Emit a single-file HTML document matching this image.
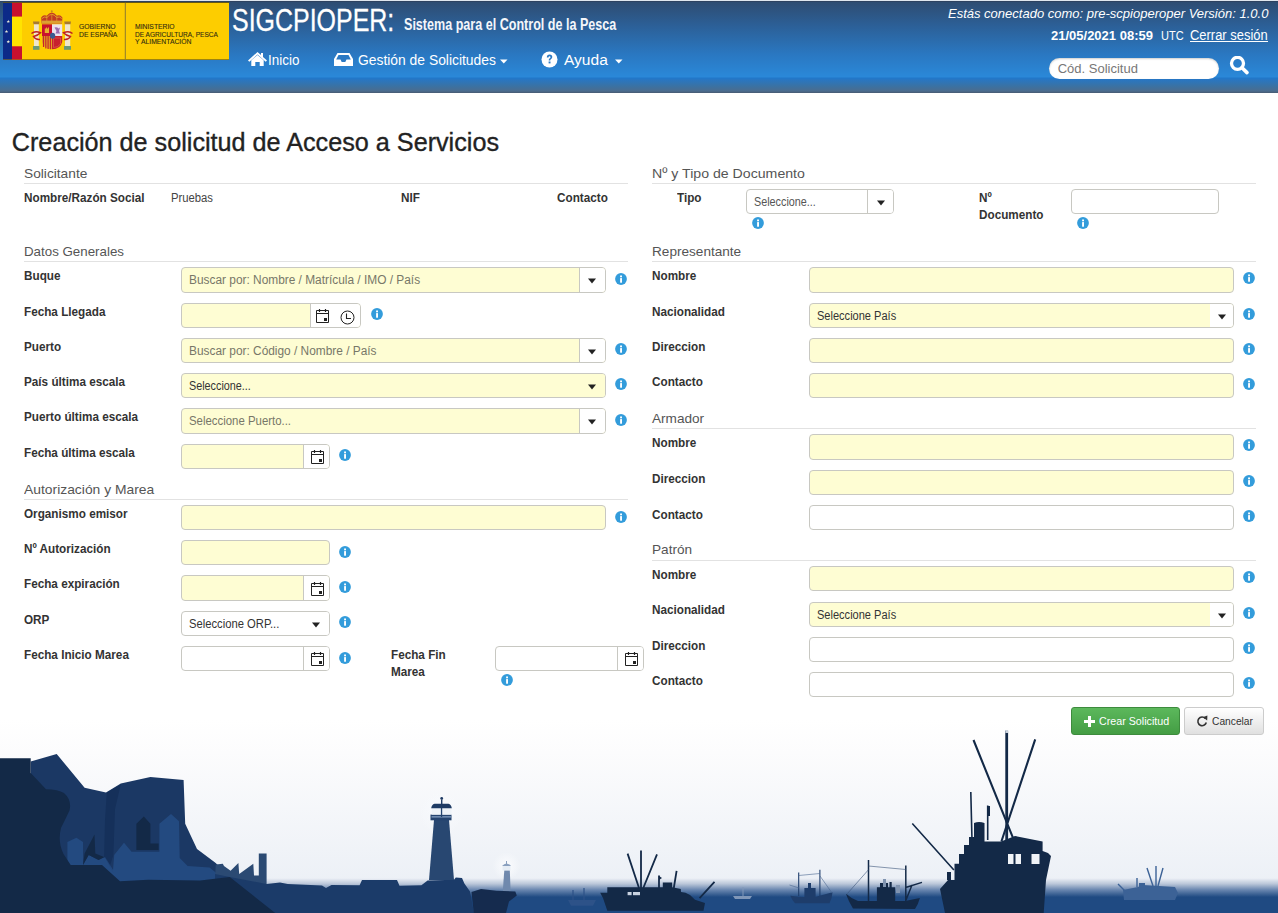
<!DOCTYPE html>
<html><head><meta charset="utf-8"><title>SIGCPIOPER</title>
<style>
html,body{margin:0;padding:0;}
body{width:1278px;height:913px;position:relative;overflow:hidden;background:#fff;font-family:"Liberation Sans",sans-serif;}
.t{position:absolute;white-space:nowrap;line-height:normal;}
.b{position:absolute;box-sizing:border-box;}
.ic{position:absolute;display:block;}
</style></head><body>
<div class="b" style="left:0;top:0;width:1278px;height:93px;background:linear-gradient(#2e4b6f 0px,#2c5f96 25px,#2a78c2 55px,#2a88d8 76.5px,#2277c8 78.5px,#2a76c0 80px,#3a72a4 86px,#4b6c8e 91px,#475a72 93px)"></div>
<div class="b" style="left:0;top:0;width:1278px;height:1px;background:#dfe6ee"></div>
<div class="b" style="left:0;top:1px;width:1278px;height:1px;background:#2d4260"></div>
<svg class="ic" style="left:0;top:0" width="232" height="62" viewBox="0 0 232 62">
<rect x="3" y="2" width="226" height="58" fill="#3c3a1e"/>
<rect x="3" y="2.8" width="226" height="56.7" fill="#fdcd00"/>
<rect x="3" y="2.8" width="9" height="56.7" fill="#0c2a88"/>
<rect x="12" y="2.8" width="10" height="14" fill="#c8102e"/>
<rect x="12" y="16.7" width="10" height="29.6" fill="#ffe300"/>
<rect x="12" y="46.3" width="10" height="13.2" fill="#c8102e"/>
<g fill="#e8e8d8"><polygon points="8.30,19.70 8.74,20.89 10.01,20.94 9.01,21.73 9.36,22.96 8.30,22.25 7.24,22.96 7.59,21.73 6.59,20.94 7.86,20.89"/><polygon points="6.50,29.70 6.94,30.89 8.21,30.94 7.21,31.73 7.56,32.96 6.50,32.25 5.44,32.96 5.79,31.73 4.79,30.94 6.06,30.89"/><polygon points="8.30,39.90 8.74,41.09 10.01,41.14 9.01,41.93 9.36,43.16 8.30,42.45 7.24,43.16 7.59,41.93 6.59,41.14 7.86,41.09"/></g>
<rect x="124.8" y="2.8" width="1" height="56.7" fill="#8a7a30"/>
<path d="M41.6 23.5 L41.2 17.5 Q43.5 14.2 46.8 15.8 Q49 12.6 51.8 12.4 Q54.6 12.6 56.8 15.8 Q60 14.2 62.4 17.5 L62 23.5z" fill="#c23a22"/>
<path d="M42 18.5 Q44.5 16 47 17.5 Q49.5 14.5 51.8 14.3 Q54.2 14.5 56.6 17.5 Q59.5 16 61.8 18.5" stroke="#e3a52c" stroke-width="0.9" fill="none"/>
<path d="M51.8 14.5V21M46.8 16V21M56.8 16V21" stroke="#e3a52c" stroke-width="0.7"/>
<rect x="41.6" y="20.6" width="20.4" height="2.9" fill="#dca032"/>
<circle cx="51.8" cy="11.2" r="1" fill="#c88a20"/>
<path d="M42 24.3H52V36H42z" fill="#c8102e"/>
<path d="M52 24.3H62.2V36H52z" fill="#ece2ee"/>
<path d="M42 36H52V49.3Q43.5 49 42 42z" fill="#e0a020"/>
<path d="M43.5 36V47M45.8 36V48.6M48.1 36V49M50.4 36V49.2" stroke="#c8202e" stroke-width="1.1"/>
<path d="M52 36H62.2V42Q60.5 49.3 52 49.3z" fill="#c8202e"/>
<path d="M53.5 38H60.5V44Q58 47.5 53.5 47.5z" fill="none" stroke="#e07050" stroke-width="0.6"/>
<ellipse cx="52.6" cy="35.8" rx="2.6" ry="3" fill="#3a5a90"/>
<path d="M44.8 33V28.5H46V27.5H47V28.5H48V27.5H49V33z" fill="#e8b030"/>
<path d="M54.5 27.5Q57 26.5 58.5 28.5L60 27.5L59 31L60 33.5H55.5L56.5 31z" fill="#9a6cb0"/>
<rect x="34" y="24" width="4.8" height="22" fill="#efe6cc"/>
<rect x="65" y="24" width="5.2" height="22" fill="#efe6cc"/>
<path d="M33 21.5H39.5L39 24.2H33.5z" fill="#a87a30"/>
<path d="M64.2 21.5H71L70.5 24.2H64.7z" fill="#a87a30"/>
<rect x="33" y="46" width="6.5" height="3.8" fill="#6a9a78"/>
<rect x="64" y="46" width="7" height="3.8" fill="#6a9a78"/>
<path d="M31.5 33.5 Q35 30.5 40.5 32.8 Q38 35.5 33.5 36.5 Q35.5 40 40 39.5" stroke="#c02020" stroke-width="1.5" fill="none"/>
<path d="M72.5 33.5 Q69 30.5 63.5 32.8 Q66 35.5 70.5 36.5 Q68.5 40 64 39.5" stroke="#c02020" stroke-width="1.5" fill="none"/>
<g font-family="Liberation Sans" font-size="6.8" fill="#2f2a10" stroke="#2f2a10" stroke-width="0.1">
<text x="79" y="29.2">GOBIERNO</text><text x="79" y="36.8">DE ESPAÑA</text>
<text x="135" y="29.2">MINISTERIO</text><text x="135" y="36.8" textLength="83" lengthAdjust="spacingAndGlyphs">DE AGRICULTURA, PESCA</text><text x="135" y="43.6">Y ALIMENTACIÓN</text>
</g></svg>
<div class="t" style="left:231.5px;top:1.54px;font-size:32px;font-weight:normal;color:#fff;transform:scaleX(0.78);transform-origin:0 0;-webkit-text-stroke:0.3px #fff;">SIGCPIOPER:</div>
<div class="t" style="left:403.5px;top:15.01px;font-size:17px;font-weight:bold;color:#f4f6fa;transform:scaleX(0.739);transform-origin:0 0;">Sistema para el Control de la Pesca</div>
<div class="t" style="left:948px;top:6.23px;font-size:13px;font-weight:normal;color:#fff;font-style:italic;">Estás conectado como: pre-scpioperoper Versión: 1.0.0</div>
<div class="t" style="left:1051px;top:28.23px;font-size:13px;font-weight:bold;color:#fff;">21/05/2021 08:59</div>
<div class="t" style="left:1160.5px;top:29.14px;font-size:12px;font-weight:normal;color:#fff;transform:scaleX(0.92);transform-origin:0 0;">UTC</div>
<div class="t" style="left:1190px;top:27.33px;font-size:14px;font-weight:normal;color:#fff;transform:scaleX(0.924);transform-origin:0 0;">Cerrar sesión</div>
<div class="b" style="left:1190px;top:41px;width:78px;height:1px;background:#fff"></div>
<div class="b" style="left:1049px;top:58px;width:170px;height:21px;background:#fff;border-radius:11px;box-shadow:inset 0 1px 2px rgba(0,0,0,.2)"></div>
<div class="t" style="left:1057.7px;top:60.94px;font-size:13px;font-weight:normal;color:#777;">Cód. Solicitud</div>
<svg class="ic" style="left:1229px;top:56px" width="21" height="20" viewBox="0 0 21 20"><circle cx="8.5" cy="7.3" r="6" fill="none" stroke="#fff" stroke-width="3.3"/><path d="M13 11.8L18 16.6" stroke="#fff" stroke-width="3.6" stroke-linecap="round"/></svg>
<svg class="ic" style="left:247px;top:51px" width="21" height="16" viewBox="0 0 21 16"><path d="M10.5 1L1 9.5L2.3 10.8L10.5 3.6L18.7 10.8L20 9.5L16 5.9V2H14V4.1z" fill="#fff"/><path d="M4.3 9.3L10.5 4.1L16.7 9.3V15H12.7V11H8.3V15H4.3z" fill="#fff"/></svg>
<div class="t" style="left:268px;top:52.33px;font-size:14px;font-weight:normal;color:#fff;transform:scaleX(0.96);transform-origin:0 0;">Inicio</div>
<svg class="ic" style="left:333px;top:52px" width="21" height="15" viewBox="0 0 21 15"><path d="M4.5 1H16.5L20 7V14H1V7z" fill="#fff"/><path d="M5.5 3H15.5L17.8 7.5H13.5L12.3 10H8.7L7.5 7.5H3.2z" fill="#2b79c4"/></svg>
<div class="t" style="left:358px;top:52.33px;font-size:14px;font-weight:normal;color:#fff;transform:scaleX(0.99);transform-origin:0 0;">Gestión de Solicitudes</div>
<svg class="ic" style="left:500px;top:59px" width="8" height="5" viewBox="0 0 8 5"><path d="M0 0.5H7.5L3.75 4.5z" fill="#fff"/></svg>
<svg class="ic" style="left:541px;top:51px" width="17" height="17" viewBox="0 0 17 17"><circle cx="8.5" cy="8.5" r="8" fill="#fff"/><path d="M5.8 6.4Q5.9 3.6 8.6 3.6Q11.3 3.7 11.3 6Q11.3 7.4 9.8 8.2Q9.3 8.5 9.3 9.6H7.7Q7.6 7.8 8.7 7.2Q9.6 6.7 9.5 6Q9.4 5.2 8.5 5.2Q7.6 5.2 7.5 6.4z" fill="#2b79c4"/><rect x="7.6" y="10.5" width="1.9" height="1.9" fill="#2b79c4"/></svg>
<div class="t" style="left:564px;top:52.33px;font-size:14px;font-weight:normal;color:#fff;transform:scaleX(1.11);transform-origin:0 0;">Ayuda</div>
<svg class="ic" style="left:615px;top:59px" width="8" height="5" viewBox="0 0 8 5"><path d="M0 0.5H7.5L3.75 4.5z" fill="#fff"/></svg>
<svg class="ic" style="left:0;top:720px" width="1278" height="193" viewBox="0 720 1278 193">
<defs>
<linearGradient id="sky" x1="0" y1="720" x2="0" y2="882" gradientUnits="userSpaceOnUse"><stop offset="0" stop-color="#fff"/><stop offset="0.2" stop-color="#fcfcfd"/><stop offset="1" stop-color="#ecf0f6"/></linearGradient>
<linearGradient id="sea" x1="0" y1="878" x2="0" y2="897" gradientUnits="userSpaceOnUse"><stop offset="0" stop-color="#eef1f7"/><stop offset="0.3" stop-color="#bcc8da"/><stop offset="0.62" stop-color="#6a87b0"/><stop offset="1" stop-color="#1f4a82"/></linearGradient>
<radialGradient id="glow" cx="441" cy="813" r="22" gradientUnits="userSpaceOnUse"><stop offset="0" stop-color="#f8fafd"/><stop offset="1" stop-color="#f8fafd" stop-opacity="0"/></radialGradient>
<radialGradient id="glow2" cx="506.5" cy="866" r="14" gradientUnits="userSpaceOnUse"><stop offset="0" stop-color="#fbfcfe"/><stop offset="1" stop-color="#fbfcfe" stop-opacity="0"/></radialGradient>
</defs>
<rect x="0" y="720" width="1278" height="193" fill="url(#sky)"/>
<rect x="0" y="878" width="1278" height="35" fill="url(#sea)"/>
<circle cx="441" cy="813" r="22" fill="url(#glow)"/>
<circle cx="506.5" cy="866" r="14" fill="url(#glow2)"/>
<!-- mid cliff layer -->
<path d="M30.7 761.4 L56.7 754 L84.6 787.7 L106 792.6 L120.8 783.5 L150.4 777 L183.6 780 L185.2 823.8 L197 848.9 L215.7 863 L232 879 L232 895 L60 895 L30.7 800z" fill="#1b3864"/>
<!-- crevice -->
<path d="M106.8 792.6 L120.8 784.4 L115 809 L113.4 855 L108.5 870 L104 860 L105 820z" fill="#15305a"/>
<!-- light buildings -->
<path d="M67.4 865 L67.4 842 L76.4 837.8 L83 842 L83 865 L88.7 855 L98.6 860 L105 856.7 L113 870 L114.2 855 L124 842.7 L131.5 851.7 L159.4 851.7 L159.4 823.8 L171 814 L179 821.3 L179.7 858 L187.6 866 L209.5 867.6 L224 879 L224 895 L90 895 L90 868z" fill="#234a80"/>
<!-- dark zigzag -->
<path d="M84.6 853.4 L94.5 834.5 L95.3 853.4 L105.2 857.5 L113.4 873 L105 856.7 L98.6 860 L88.7 855 L83 865z" fill="#132947"/>
<path d="M136.4 850 L136.4 823.8 L143.8 816.4 L150.4 823.8 L150.4 843.5 L158.6 843.5 L158.6 850z" fill="#132947"/>
<!-- factory -->
<path d="M215.7 864.5 L222.8 863.7 L224 866 L230.6 870.8 L238.4 863 L239.2 874 L253.3 863.7 L254 875.5 L258.8 875.5 L258.8 853.5 L266.6 853.5 L266.6 886 L240 895 L215 880z" fill="#2b4a73"/>
<!-- land strip -->
<path d="M215 874 L229.8 877 L266.6 884 L280 882.5 L287.7 884 L322 885.6 L326 888 L331.5 885 L359.6 885.2 L362 880 L397 880 L399.5 885.7 L421.4 885.2 L427.6 880.5 L454 879.7 L455.8 877.4 L462 878 L464.4 883.6 L470 891.5 L474 913 L215 913z" fill="#1b3b69"/>
<!-- darkest cliff -->
<path d="M0 758.2 L30.7 758.2 L30.7 773 L46 789.3 Q58 789.5 64 793 Q72 800 69.5 810.5 Q65 820 61 828 Q57.5 842 63.5 854 L70.7 865 L102 865 L120 881.3 L148 879.7 L200 880.5 L229.8 877 L275.2 913 L0 913z" fill="#132947"/>
<!-- rock -->
<path d="M471.5 892 L481 889 L496.5 890.7 L515.3 891.5 L516.8 895.4 L509 901.6 L506 913 L473.8 913z" fill="#152b4e"/>
<!-- lighthouse -->
<path d="M434 820 L449 820 L454 880 L429 880z" fill="#284771"/>
<rect x="430.5" y="814.6" width="21" height="5.7" fill="#25446f"/>
<rect x="431.5" y="816.4" width="19.5" height="1" fill="#9fb8da"/>
<rect x="431.8" y="808" width="19.8" height="6.6" fill="#eef3f8"/>
<rect x="440.9" y="807" width="1.3" height="10" fill="#25446f"/>
<path d="M431.2 808.2 Q431.8 804.6 434.5 803.8 L448.5 803.8 Q451.2 804.6 451.8 808.2z" fill="#1f3b64"/>
<rect x="441" y="799.5" width="1.4" height="5" fill="#1f3b64"/>
<circle cx="441.7" cy="798.4" r="1.4" fill="#1f3b64"/>
<!-- small lighthouse -->
<path d="M504.3 870.3 L509.8 870.3 L510.6 891 L502.8 891z" fill="#7089ad"/>
<rect x="502.5" y="865.5" width="8" height="5" fill="#e6edf5"/>
<path d="M502 866 Q506.4 861 511 866z" fill="#8aa0bf"/>
<rect x="506" y="861" width="1" height="3" fill="#8aa0bf"/>
<!-- faint boats -->
<path d="M568 900 L596 900 L593 905.7 L571 905.7z" fill="#2d5288"/>
<path d="M573 890 V900 M584 888 V900" stroke="#2d5288" stroke-width="1.2"/>
<path d="M733 896 L752 896 L750 899 L735 899z" fill="#8097b8"/>
<path d="M743 887 V896" stroke="#8097b8" stroke-width="1"/>
<!-- boat 1 -->
<path d="M600.2 892.8 L607.3 892.8 L607.3 887.3 L662.8 887.3 L662.8 882.6 L672.2 882.6 L672.2 887.3 L680.8 888.9 L681 892 L685.5 892.8 L690 895 L695 899.8 L705 903 L703.5 910.8 L607.3 910.8 L603 898z" fill="#132947"/>
<path d="M641 850.5 V888 M627.6 853.6 L639 888 M657 854.4 L643.3 888 M714.5 881.8 L699.6 898.2 M676.6 870.9 L673.8 888 M659 875.6 V888" stroke="#132947" stroke-width="1.8"/>
<path d="M659 876 L662 878 L659 880z" fill="#132947"/>
<rect x="627.6" y="892" width="4" height="3.2" fill="#c8d2e0"/>
<rect x="633" y="892" width="7" height="3.2" fill="#c8d2e0"/>
<!-- boat 2 -->
<path d="M790.3 895.8 Q800 897.5 815 897 L832.5 892.3 Q832 899 829.5 903.2 L795 903.2 Q792 900 790.3 895.8z" fill="#1e3d6b"/>
<path d="M798.7 872.5 V896 M819.9 869.7 V896" stroke="#1e3d6b" stroke-width="1.1"/>
<path d="M798.7 875.5 L819.9 873.5 M789.5 885 L799 888 M820 876 L832 893" stroke="#4a6690" stroke-width="0.6" fill="none"/>
<path d="M804.4 888 H815.6 V897 H804.4z M808 883 H811 V888 H808z" fill="#1e3d6b"/>
<!-- boat 3 -->
<path d="M846 893.7 Q852 899 858 901 L905 901 L919.9 897.9 Q918 905 915 909 L853 908.5 Q848 900 846 893.7z" fill="#132947"/>
<path d="M868.5 859.9 V901 M905.8 865.5 V901 M906.5 887.3 L922 882.4 M912 885 L906 900" stroke="#132947" stroke-width="1.5"/>
<path d="M868.5 866 L905.8 869.5 M847.3 893.7 L868.5 869.7" stroke="#3a5478" stroke-width="0.6" fill="none"/>
<path d="M876.9 887.3 H895.2 V901 H876.9z M880 883 H888 V887.3 H880z" fill="#132947"/>
<rect x="889.5" y="882" width="2.2" height="6" fill="#132947"/>
<rect x="883" y="879" width="3" height="8" fill="#8094b0"/>
<rect x="896" y="885" width="4" height="8" fill="#8094b0"/>
<!-- big boat -->
<path d="M973.5 740 L1014 840.4 M1035.2 739.4 L1001.4 841.5" stroke="#132947" stroke-width="2.1"/><path d="M1006.7 730.6 V842" stroke="#132947" stroke-width="2.8"/>
<rect x="1005.4" y="730" width="2.6" height="3" fill="#c8d0dc"/>
<path d="M970.8 792 L972 840 M987.7 805.6 V840 M912.3 823.5 L953.9 870" stroke="#132947" stroke-width="1.6"/>
<path d="M987 806 L990 806 L990 816 L987 816z" fill="#132947"/>
<path d="M974 823 Q979 821 984.5 823 L984.5 841.5 L1001 841.5 L1015 836 L1042.6 841.5 L1042.6 851 L1048 853 L1051 856 L1046 880 L1043.7 913 L945 913 L940 889 L948 880 L954.5 880 L954.5 863.7 L959 863.7 L959 854 L964 854 L964 845 L969 845 L969 837 L974 837z" fill="#132947"/>
<rect x="1008" y="854" width="13" height="10" fill="#f0f3f7"/>
<rect x="1013.5" y="854" width="2" height="10" fill="#132947"/>
<rect x="1031.5" y="854" width="8" height="10" fill="#f0f3f7"/>
<rect x="947" y="872" width="4" height="8" fill="#132947"/>
<!-- far right boat -->
<g fill="#3c6296" stroke="#3c6296">
<path d="M1123 890 L1138 887 L1143 885 L1175 887 L1178 893 L1175 900 L1124 900z" stroke="none"/>
<path d="M1156 866 V886 M1147 868 L1153 886 M1163 868 L1158 886 M1118 884 L1128 894 M1137 878 V887" stroke-width="1.4" fill="none"/>
<rect x="1139" y="883" width="6" height="4" stroke="none"/>
</g>
</svg>

<div class="t" style="left:11.8px;top:128.19px;font-size:25.2px;font-weight:normal;color:#222;-webkit-text-stroke:0.35px #222;">Creación de solicitud de Acceso a Servicios</div>
<div class="t" style="left:24px;top:165.69px;font-size:13.6px;font-weight:normal;color:#555;transform:scaleX(1.01);transform-origin:0 0;">Solicitante</div>
<div class="b" style="left:24px;top:183px;width:604px;height:1px;background:#e2e2e2"></div>
<div class="t" style="left:24px;top:191.14px;font-size:12px;font-weight:bold;color:#333;transform:scaleX(0.977);transform-origin:0 0;">Nombre/Razón Social</div>
<div class="t" style="left:171px;top:191.14px;font-size:12px;font-weight:normal;color:#444;transform:scaleX(0.94);transform-origin:0 0;">Pruebas</div>
<div class="t" style="left:401px;top:191.14px;font-size:12px;font-weight:bold;color:#333;transform:scaleX(0.977);transform-origin:0 0;">NIF</div>
<div class="t" style="left:557px;top:191.14px;font-size:12px;font-weight:bold;color:#333;transform:scaleX(0.977);transform-origin:0 0;">Contacto</div>
<div class="t" style="left:24px;top:243.69px;font-size:13.6px;font-weight:normal;color:#555;transform:scaleX(0.98);transform-origin:0 0;">Datos Generales</div>
<div class="b" style="left:24px;top:261px;width:604px;height:1px;background:#e2e2e2"></div>
<div class="t" style="left:24px;top:269.14px;font-size:12px;font-weight:bold;color:#333;transform:scaleX(0.977);transform-origin:0 0;">Buque</div>
<div class="t" style="left:24px;top:305.14px;font-size:12px;font-weight:bold;color:#333;transform:scaleX(0.977);transform-origin:0 0;">Fecha Llegada</div>
<div class="t" style="left:24px;top:340.14px;font-size:12px;font-weight:bold;color:#333;transform:scaleX(0.977);transform-origin:0 0;">Puerto</div>
<div class="t" style="left:24px;top:375.14px;font-size:12px;font-weight:bold;color:#333;transform:scaleX(0.977);transform-origin:0 0;">País última escala</div>
<div class="t" style="left:24px;top:410.14px;font-size:12px;font-weight:bold;color:#333;transform:scaleX(0.977);transform-origin:0 0;">Puerto última escala</div>
<div class="t" style="left:24px;top:445.74px;font-size:12px;font-weight:bold;color:#333;transform:scaleX(0.977);transform-origin:0 0;">Fecha última escala</div>
<div class="b" style="left:181px;top:267px;width:425px;height:26px;background:#fefdd3;border:1px solid #c8c8c2;border-radius:4px;overflow:hidden"><div style="position:absolute;right:0;top:0;bottom:0;width:25px;background:#fff;border-left:1px solid #c8c8c2"></div><svg width="8" height="6" viewBox="0 0 8 6" style="position:absolute;left:406px;top:10px"><path d="M0 0.5H8L4 5.5z" fill="#222"/></svg></div>
<div class="t" style="left:189px;top:272.64px;font-size:12px;font-weight:normal;color:#777768;transform:scaleX(0.99);transform-origin:0 0;">Buscar por: Nombre / Matrícula / IMO / País</div>
<svg class="ic" style="left:615px;top:272.5px" width="12" height="12" viewBox="0 0 12 12"><circle cx="6" cy="6" r="5.9" fill="#339cdb"/><rect x="5.1" y="2.5" width="1.9" height="1.8" fill="#fff"/><rect x="5.1" y="5.1" width="1.9" height="4.6" fill="#fff"/></svg>
<div class="b" style="left:181px;top:303px;width:180px;height:25px;background:#fefdd3;border:1px solid #c8c8c2;border-radius:4px;overflow:hidden"><div style="position:absolute;right:0;top:0;bottom:0;width:49px;background:#fff;border-left:1px solid #c8c8c2"></div><svg width="15" height="15" viewBox="0 0 15 15" style="position:absolute;left:133px;top:4px"><path d="M1.5 2.5H13.5V14.5H1.5z" fill="none" stroke="#222" stroke-width="1"/><path d="M1.5 5.5H13.5" stroke="#222" stroke-width="1"/><path d="M4.5 1V4M10.5 1V4" stroke="#222" stroke-width="1.2"/><rect x="9" y="10" width="3" height="3" fill="#222"/></svg><svg width="15" height="15" viewBox="0 0 15 15" style="position:absolute;left:158px;top:6px"><circle cx="7.5" cy="7.5" r="6.5" fill="none" stroke="#222" stroke-width="1"/><path d="M6.5 3.5V8.5H11" fill="none" stroke="#222" stroke-width="1.1"/></svg></div>
<svg class="ic" style="left:371px;top:307.5px" width="12" height="12" viewBox="0 0 12 12"><circle cx="6" cy="6" r="5.9" fill="#339cdb"/><rect x="5.1" y="2.5" width="1.9" height="1.8" fill="#fff"/><rect x="5.1" y="5.1" width="1.9" height="4.6" fill="#fff"/></svg>
<div class="b" style="left:181px;top:338px;width:425px;height:25px;background:#fefdd3;border:1px solid #c8c8c2;border-radius:4px;overflow:hidden"><div style="position:absolute;right:0;top:0;bottom:0;width:25px;background:#fff;border-left:1px solid #c8c8c2"></div><svg width="8" height="6" viewBox="0 0 8 6" style="position:absolute;left:406px;top:10px"><path d="M0 0.5H8L4 5.5z" fill="#222"/></svg></div>
<div class="t" style="left:189px;top:343.64px;font-size:12px;font-weight:normal;color:#777768;transform:scaleX(0.99);transform-origin:0 0;">Buscar por: Código / Nombre / País</div>
<svg class="ic" style="left:615px;top:342.5px" width="12" height="12" viewBox="0 0 12 12"><circle cx="6" cy="6" r="5.9" fill="#339cdb"/><rect x="5.1" y="2.5" width="1.9" height="1.8" fill="#fff"/><rect x="5.1" y="5.1" width="1.9" height="4.6" fill="#fff"/></svg>
<div class="b" style="left:181px;top:373px;width:425px;height:25px;background:#fefdd3;border:1px solid #c8c8c2;border-radius:4px;overflow:hidden"><div style="position:absolute;right:0;top:0;bottom:0;width:25px;background:#fefdd3"></div><svg width="8" height="6" viewBox="0 0 8 6" style="position:absolute;left:406px;top:10px"><path d="M0 0.5H8L4 5.5z" fill="#222"/></svg></div>
<div class="t" style="left:189px;top:378.64px;font-size:12px;font-weight:normal;color:#333;transform:scaleX(0.9);transform-origin:0 0;">Seleccione...</div>
<svg class="ic" style="left:615px;top:378px" width="12" height="12" viewBox="0 0 12 12"><circle cx="6" cy="6" r="5.9" fill="#339cdb"/><rect x="5.1" y="2.5" width="1.9" height="1.8" fill="#fff"/><rect x="5.1" y="5.1" width="1.9" height="4.6" fill="#fff"/></svg>
<div class="b" style="left:181px;top:408px;width:425px;height:26px;background:#fefdd3;border:1px solid #c8c8c2;border-radius:4px;overflow:hidden"><div style="position:absolute;right:0;top:0;bottom:0;width:25px;background:#fff;border-left:1px solid #c8c8c2"></div><svg width="8" height="6" viewBox="0 0 8 6" style="position:absolute;left:406px;top:10px"><path d="M0 0.5H8L4 5.5z" fill="#222"/></svg></div>
<div class="t" style="left:189px;top:413.64px;font-size:12px;font-weight:normal;color:#777768;transform:scaleX(0.95);transform-origin:0 0;">Seleccione Puerto...</div>
<svg class="ic" style="left:615px;top:413.5px" width="12" height="12" viewBox="0 0 12 12"><circle cx="6" cy="6" r="5.9" fill="#339cdb"/><rect x="5.1" y="2.5" width="1.9" height="1.8" fill="#fff"/><rect x="5.1" y="5.1" width="1.9" height="4.6" fill="#fff"/></svg>
<div class="b" style="left:181px;top:444px;width:149px;height:25px;background:#fefdd3;border:1px solid #c8c8c2;border-radius:4px;overflow:hidden"><div style="position:absolute;right:0;top:0;bottom:0;width:25px;background:#fff;border-left:1px solid #c8c8c2"></div><svg width="15" height="15" viewBox="0 0 15 15" style="position:absolute;left:128px;top:4px"><path d="M1.5 2.5H13.5V14.5H1.5z" fill="none" stroke="#222" stroke-width="1"/><path d="M1.5 5.5H13.5" stroke="#222" stroke-width="1"/><path d="M4.5 1V4M10.5 1V4" stroke="#222" stroke-width="1.2"/><rect x="9" y="10" width="3" height="3" fill="#222"/></svg></div>
<svg class="ic" style="left:339px;top:448.5px" width="12" height="12" viewBox="0 0 12 12"><circle cx="6" cy="6" r="5.9" fill="#339cdb"/><rect x="5.1" y="2.5" width="1.9" height="1.8" fill="#fff"/><rect x="5.1" y="5.1" width="1.9" height="4.6" fill="#fff"/></svg>
<div class="t" style="left:24px;top:481.89px;font-size:13.6px;font-weight:normal;color:#555;transform:scaleX(1.02);transform-origin:0 0;">Autorización y Marea</div>
<div class="b" style="left:24px;top:499px;width:604px;height:1px;background:#e2e2e2"></div>
<div class="t" style="left:24px;top:507.44px;font-size:12px;font-weight:bold;color:#333;transform:scaleX(0.977);transform-origin:0 0;">Organismo emisor</div>
<div class="t" style="left:24px;top:542.14px;font-size:12px;font-weight:bold;color:#333;transform:scaleX(0.977);transform-origin:0 0;">Nº Autorización</div>
<div class="t" style="left:24px;top:576.94px;font-size:12px;font-weight:bold;color:#333;transform:scaleX(0.977);transform-origin:0 0;">Fecha expiración</div>
<div class="t" style="left:24px;top:612.84px;font-size:12px;font-weight:bold;color:#333;transform:scaleX(0.977);transform-origin:0 0;">ORP</div>
<div class="t" style="left:24px;top:647.64px;font-size:12px;font-weight:bold;color:#333;transform:scaleX(0.977);transform-origin:0 0;">Fecha Inicio Marea</div>
<div class="b" style="left:181px;top:505px;width:425px;height:25px;background:#fefdd3;border:1px solid #c8c8c2;border-radius:4px;overflow:hidden"></div>
<svg class="ic" style="left:615px;top:510.5px" width="12" height="12" viewBox="0 0 12 12"><circle cx="6" cy="6" r="5.9" fill="#339cdb"/><rect x="5.1" y="2.5" width="1.9" height="1.8" fill="#fff"/><rect x="5.1" y="5.1" width="1.9" height="4.6" fill="#fff"/></svg>
<div class="b" style="left:181px;top:540px;width:149px;height:25px;background:#fefdd3;border:1px solid #c8c8c2;border-radius:4px;overflow:hidden"></div>
<svg class="ic" style="left:339px;top:545.5px" width="12" height="12" viewBox="0 0 12 12"><circle cx="6" cy="6" r="5.9" fill="#339cdb"/><rect x="5.1" y="2.5" width="1.9" height="1.8" fill="#fff"/><rect x="5.1" y="5.1" width="1.9" height="4.6" fill="#fff"/></svg>
<div class="b" style="left:181px;top:575px;width:149px;height:26px;background:#fefdd3;border:1px solid #c8c8c2;border-radius:4px;overflow:hidden"><div style="position:absolute;right:0;top:0;bottom:0;width:25px;background:#fff;border-left:1px solid #c8c8c2"></div><svg width="15" height="15" viewBox="0 0 15 15" style="position:absolute;left:128px;top:5px"><path d="M1.5 2.5H13.5V14.5H1.5z" fill="none" stroke="#222" stroke-width="1"/><path d="M1.5 5.5H13.5" stroke="#222" stroke-width="1"/><path d="M4.5 1V4M10.5 1V4" stroke="#222" stroke-width="1.2"/><rect x="9" y="10" width="3" height="3" fill="#222"/></svg></div>
<svg class="ic" style="left:339px;top:580.5px" width="12" height="12" viewBox="0 0 12 12"><circle cx="6" cy="6" r="5.9" fill="#339cdb"/><rect x="5.1" y="2.5" width="1.9" height="1.8" fill="#fff"/><rect x="5.1" y="5.1" width="1.9" height="4.6" fill="#fff"/></svg>
<div class="b" style="left:181px;top:611px;width:149px;height:25px;background:#fff;border:1px solid #c8c8c2;border-radius:4px;overflow:hidden"><div style="position:absolute;right:0;top:0;bottom:0;width:25px;background:#fff"></div><svg width="8" height="6" viewBox="0 0 8 6" style="position:absolute;left:130px;top:10px"><path d="M0 0.5H8L4 5.5z" fill="#222"/></svg></div>
<div class="t" style="left:189px;top:616.64px;font-size:12px;font-weight:normal;color:#333;transform:scaleX(0.936);transform-origin:0 0;">Seleccione ORP...</div>
<svg class="ic" style="left:339px;top:615.5px" width="12" height="12" viewBox="0 0 12 12"><circle cx="6" cy="6" r="5.9" fill="#339cdb"/><rect x="5.1" y="2.5" width="1.9" height="1.8" fill="#fff"/><rect x="5.1" y="5.1" width="1.9" height="4.6" fill="#fff"/></svg>
<div class="b" style="left:181px;top:646px;width:149px;height:25px;background:#fff;border:1px solid #c8c8c2;border-radius:4px;overflow:hidden"><div style="position:absolute;right:0;top:0;bottom:0;width:25px;background:#fff;border-left:1px solid #c8c8c2"></div><svg width="15" height="15" viewBox="0 0 15 15" style="position:absolute;left:128px;top:4px"><path d="M1.5 2.5H13.5V14.5H1.5z" fill="none" stroke="#222" stroke-width="1"/><path d="M1.5 5.5H13.5" stroke="#222" stroke-width="1"/><path d="M4.5 1V4M10.5 1V4" stroke="#222" stroke-width="1.2"/><rect x="9" y="10" width="3" height="3" fill="#222"/></svg></div>
<svg class="ic" style="left:339px;top:651.5px" width="12" height="12" viewBox="0 0 12 12"><circle cx="6" cy="6" r="5.9" fill="#339cdb"/><rect x="5.1" y="2.5" width="1.9" height="1.8" fill="#fff"/><rect x="5.1" y="5.1" width="1.9" height="4.6" fill="#fff"/></svg>
<div class="t" style="left:391px;top:647.84px;font-size:12px;font-weight:bold;color:#333;transform:scaleX(0.977);transform-origin:0 0;">Fecha Fin</div>
<div class="t" style="left:391px;top:665.14px;font-size:12px;font-weight:bold;color:#333;transform:scaleX(0.977);transform-origin:0 0;">Marea</div>
<div class="b" style="left:495px;top:646px;width:149px;height:25px;background:#fff;border:1px solid #c8c8c2;border-radius:4px;overflow:hidden"><div style="position:absolute;right:0;top:0;bottom:0;width:25px;background:#fff;border-left:1px solid #c8c8c2"></div><svg width="15" height="15" viewBox="0 0 15 15" style="position:absolute;left:128px;top:4px"><path d="M1.5 2.5H13.5V14.5H1.5z" fill="none" stroke="#222" stroke-width="1"/><path d="M1.5 5.5H13.5" stroke="#222" stroke-width="1"/><path d="M4.5 1V4M10.5 1V4" stroke="#222" stroke-width="1.2"/><rect x="9" y="10" width="3" height="3" fill="#222"/></svg></div>
<svg class="ic" style="left:501px;top:673.5px" width="12" height="12" viewBox="0 0 12 12"><circle cx="6" cy="6" r="5.9" fill="#339cdb"/><rect x="5.1" y="2.5" width="1.9" height="1.8" fill="#fff"/><rect x="5.1" y="5.1" width="1.9" height="4.6" fill="#fff"/></svg>
<div class="t" style="left:652px;top:165.69px;font-size:13.6px;font-weight:normal;color:#555;transform:scaleX(1.04);transform-origin:0 0;">Nº y Tipo de Documento</div>
<div class="b" style="left:652px;top:183px;width:604px;height:1px;background:#e2e2e2"></div>
<div class="t" style="left:677px;top:191.14px;font-size:12px;font-weight:bold;color:#333;transform:scaleX(0.977);transform-origin:0 0;">Tipo</div>
<div class="b" style="left:746px;top:189px;width:148px;height:25px;background:#fff;border:1px solid #c8c8c2;border-radius:4px;overflow:hidden"><div style="position:absolute;right:0;top:0;bottom:0;width:25px;background:#fff;border-left:1px solid #c8c8c2"></div><svg width="8" height="6" viewBox="0 0 8 6" style="position:absolute;left:130px;top:10px"><path d="M0 0.5H8L4 5.5z" fill="#222"/></svg></div>
<div class="t" style="left:754px;top:194.64px;font-size:12px;font-weight:normal;color:#555;transform:scaleX(0.9);transform-origin:0 0;">Seleccione...</div>
<svg class="ic" style="left:751.5px;top:216.7px" width="12" height="12" viewBox="0 0 12 12"><circle cx="6" cy="6" r="5.9" fill="#339cdb"/><rect x="5.1" y="2.5" width="1.9" height="1.8" fill="#fff"/><rect x="5.1" y="5.1" width="1.9" height="4.6" fill="#fff"/></svg>
<div class="t" style="left:978.7px;top:190.94px;font-size:12px;font-weight:bold;color:#333;transform:scaleX(0.977);transform-origin:0 0;">Nº</div>
<div class="t" style="left:978.7px;top:208.14px;font-size:12px;font-weight:bold;color:#333;transform:scaleX(0.977);transform-origin:0 0;">Documento</div>
<div class="b" style="left:1071px;top:189px;width:148px;height:25px;background:#fff;border:1px solid #c8c8c2;border-radius:4px;overflow:hidden"></div>
<svg class="ic" style="left:1077px;top:217px" width="12" height="12" viewBox="0 0 12 12"><circle cx="6" cy="6" r="5.9" fill="#339cdb"/><rect x="5.1" y="2.5" width="1.9" height="1.8" fill="#fff"/><rect x="5.1" y="5.1" width="1.9" height="4.6" fill="#fff"/></svg>
<div class="t" style="left:652px;top:243.69px;font-size:13.6px;font-weight:normal;color:#555;">Representante</div>
<div class="b" style="left:652px;top:261px;width:604px;height:1px;background:#e2e2e2"></div>
<div class="t" style="left:652px;top:410.69px;font-size:13.6px;font-weight:normal;color:#555;">Armador</div>
<div class="b" style="left:652px;top:428px;width:604px;height:1px;background:#e2e2e2"></div>
<div class="t" style="left:652px;top:542.09px;font-size:13.6px;font-weight:normal;color:#555;">Patrón</div>
<div class="b" style="left:652px;top:560px;width:604px;height:1px;background:#e2e2e2"></div>
<div class="t" style="left:652px;top:269.14px;font-size:12px;font-weight:bold;color:#333;transform:scaleX(0.977);transform-origin:0 0;">Nombre</div>
<div class="b" style="left:809px;top:267px;width:425px;height:26px;background:#fefdd3;border:1px solid #c8c8c2;border-radius:4px;overflow:hidden"></div>
<svg class="ic" style="left:1243.1px;top:272.4px" width="12" height="12" viewBox="0 0 12 12"><circle cx="6" cy="6" r="5.9" fill="#339cdb"/><rect x="5.1" y="2.5" width="1.9" height="1.8" fill="#fff"/><rect x="5.1" y="5.1" width="1.9" height="4.6" fill="#fff"/></svg>
<div class="t" style="left:652px;top:305.14px;font-size:12px;font-weight:bold;color:#333;transform:scaleX(0.977);transform-origin:0 0;">Nacionalidad</div>
<div class="b" style="left:809px;top:303px;width:425px;height:25px;background:#fefdd3;border:1px solid #c8c8c2;border-radius:4px;overflow:hidden"><div style="position:absolute;right:0;top:0;bottom:0;width:23px;background:#fff"></div><svg width="8" height="6" viewBox="0 0 8 6" style="position:absolute;left:408px;top:10px"><path d="M0 0.5H8L4 5.5z" fill="#222"/></svg></div>
<div class="t" style="left:817px;top:308.64px;font-size:12px;font-weight:normal;color:#333;transform:scaleX(0.92);transform-origin:0 0;">Seleccione País</div>
<svg class="ic" style="left:1243.1px;top:308.4px" width="12" height="12" viewBox="0 0 12 12"><circle cx="6" cy="6" r="5.9" fill="#339cdb"/><rect x="5.1" y="2.5" width="1.9" height="1.8" fill="#fff"/><rect x="5.1" y="5.1" width="1.9" height="4.6" fill="#fff"/></svg>
<div class="t" style="left:652px;top:340.14px;font-size:12px;font-weight:bold;color:#333;transform:scaleX(0.977);transform-origin:0 0;">Direccion</div>
<div class="b" style="left:809px;top:338px;width:425px;height:25px;background:#fefdd3;border:1px solid #c8c8c2;border-radius:4px;overflow:hidden"></div>
<svg class="ic" style="left:1243.1px;top:343.4px" width="12" height="12" viewBox="0 0 12 12"><circle cx="6" cy="6" r="5.9" fill="#339cdb"/><rect x="5.1" y="2.5" width="1.9" height="1.8" fill="#fff"/><rect x="5.1" y="5.1" width="1.9" height="4.6" fill="#fff"/></svg>
<div class="t" style="left:652px;top:374.84px;font-size:12px;font-weight:bold;color:#333;transform:scaleX(0.977);transform-origin:0 0;">Contacto</div>
<div class="b" style="left:809px;top:373px;width:425px;height:25px;background:#fefdd3;border:1px solid #c8c8c2;border-radius:4px;overflow:hidden"></div>
<svg class="ic" style="left:1243.1px;top:378.4px" width="12" height="12" viewBox="0 0 12 12"><circle cx="6" cy="6" r="5.9" fill="#339cdb"/><rect x="5.1" y="2.5" width="1.9" height="1.8" fill="#fff"/><rect x="5.1" y="5.1" width="1.9" height="4.6" fill="#fff"/></svg>
<div class="t" style="left:652px;top:436.14px;font-size:12px;font-weight:bold;color:#333;transform:scaleX(0.977);transform-origin:0 0;">Nombre</div>
<div class="b" style="left:809px;top:434px;width:425px;height:26px;background:#fefdd3;border:1px solid #c8c8c2;border-radius:4px;overflow:hidden"></div>
<svg class="ic" style="left:1243.1px;top:439.4px" width="12" height="12" viewBox="0 0 12 12"><circle cx="6" cy="6" r="5.9" fill="#339cdb"/><rect x="5.1" y="2.5" width="1.9" height="1.8" fill="#fff"/><rect x="5.1" y="5.1" width="1.9" height="4.6" fill="#fff"/></svg>
<div class="t" style="left:652px;top:472.44px;font-size:12px;font-weight:bold;color:#333;transform:scaleX(0.977);transform-origin:0 0;">Direccion</div>
<div class="b" style="left:809px;top:470px;width:425px;height:25px;background:#fefdd3;border:1px solid #c8c8c2;border-radius:4px;overflow:hidden"></div>
<svg class="ic" style="left:1243.1px;top:475.4px" width="12" height="12" viewBox="0 0 12 12"><circle cx="6" cy="6" r="5.9" fill="#339cdb"/><rect x="5.1" y="2.5" width="1.9" height="1.8" fill="#fff"/><rect x="5.1" y="5.1" width="1.9" height="4.6" fill="#fff"/></svg>
<div class="t" style="left:652px;top:507.74px;font-size:12px;font-weight:bold;color:#333;transform:scaleX(0.977);transform-origin:0 0;">Contacto</div>
<div class="b" style="left:809px;top:505px;width:425px;height:25px;background:#fff;border:1px solid #c8c8c2;border-radius:4px;overflow:hidden"></div>
<svg class="ic" style="left:1243.1px;top:510.4px" width="12" height="12" viewBox="0 0 12 12"><circle cx="6" cy="6" r="5.9" fill="#339cdb"/><rect x="5.1" y="2.5" width="1.9" height="1.8" fill="#fff"/><rect x="5.1" y="5.1" width="1.9" height="4.6" fill="#fff"/></svg>
<div class="t" style="left:652px;top:568.14px;font-size:12px;font-weight:bold;color:#333;transform:scaleX(0.977);transform-origin:0 0;">Nombre</div>
<div class="b" style="left:809px;top:566px;width:425px;height:25px;background:#fefdd3;border:1px solid #c8c8c2;border-radius:4px;overflow:hidden"></div>
<svg class="ic" style="left:1243.1px;top:571.4px" width="12" height="12" viewBox="0 0 12 12"><circle cx="6" cy="6" r="5.9" fill="#339cdb"/><rect x="5.1" y="2.5" width="1.9" height="1.8" fill="#fff"/><rect x="5.1" y="5.1" width="1.9" height="4.6" fill="#fff"/></svg>
<div class="t" style="left:652px;top:603.44px;font-size:12px;font-weight:bold;color:#333;transform:scaleX(0.977);transform-origin:0 0;">Nacionalidad</div>
<div class="b" style="left:809px;top:602px;width:425px;height:25px;background:#fefdd3;border:1px solid #c8c8c2;border-radius:4px;overflow:hidden"><div style="position:absolute;right:0;top:0;bottom:0;width:23px;background:#fff"></div><svg width="8" height="6" viewBox="0 0 8 6" style="position:absolute;left:408px;top:10px"><path d="M0 0.5H8L4 5.5z" fill="#222"/></svg></div>
<div class="t" style="left:817px;top:607.64px;font-size:12px;font-weight:normal;color:#333;transform:scaleX(0.92);transform-origin:0 0;">Seleccione País</div>
<svg class="ic" style="left:1243.1px;top:607.4px" width="12" height="12" viewBox="0 0 12 12"><circle cx="6" cy="6" r="5.9" fill="#339cdb"/><rect x="5.1" y="2.5" width="1.9" height="1.8" fill="#fff"/><rect x="5.1" y="5.1" width="1.9" height="4.6" fill="#fff"/></svg>
<div class="t" style="left:652px;top:638.94px;font-size:12px;font-weight:bold;color:#333;transform:scaleX(0.977);transform-origin:0 0;">Direccion</div>
<div class="b" style="left:809px;top:637px;width:425px;height:25px;background:#fff;border:1px solid #c8c8c2;border-radius:4px;overflow:hidden"></div>
<svg class="ic" style="left:1243.1px;top:642.4px" width="12" height="12" viewBox="0 0 12 12"><circle cx="6" cy="6" r="5.9" fill="#339cdb"/><rect x="5.1" y="2.5" width="1.9" height="1.8" fill="#fff"/><rect x="5.1" y="5.1" width="1.9" height="4.6" fill="#fff"/></svg>
<div class="t" style="left:652px;top:674.14px;font-size:12px;font-weight:bold;color:#333;transform:scaleX(0.977);transform-origin:0 0;">Contacto</div>
<div class="b" style="left:809px;top:672px;width:425px;height:25px;background:#fff;border:1px solid #c8c8c2;border-radius:4px;overflow:hidden"></div>
<svg class="ic" style="left:1243.1px;top:677.4px" width="12" height="12" viewBox="0 0 12 12"><circle cx="6" cy="6" r="5.9" fill="#339cdb"/><rect x="5.1" y="2.5" width="1.9" height="1.8" fill="#fff"/><rect x="5.1" y="5.1" width="1.9" height="4.6" fill="#fff"/></svg>
<div class="b" style="left:1071px;top:707px;width:109px;height:28px;border:1px solid #3d8b3d;border-radius:3px;background:linear-gradient(#5cb85c,#449d44)"></div>
<svg class="ic" style="left:1084px;top:716px" width="11" height="11" viewBox="0 0 11 11"><path d="M4 0H7V4H11V7H7V11H4V7H0V4H4z" fill="#fff"/></svg>
<div class="t" style="left:1098.9px;top:714.59px;font-size:11.5px;font-weight:normal;color:#fff;transform:scaleX(0.93);transform-origin:0 0;">Crear Solicitud</div>
<div class="b" style="left:1184px;top:707px;width:80px;height:28px;border:1px solid #ccc;border-radius:3px;background:linear-gradient(#fff,#e0e0e0)"></div>
<svg class="ic" style="left:1196px;top:715px" width="12" height="12" viewBox="0 0 12 12"><path d="M9.3 3.4A4.3 4.3 0 1 0 10.3 7.6" fill="none" stroke="#333" stroke-width="1.6"/><path d="M6.8 2.2L11.4 0.6L11.2 5.6z" fill="#333"/></svg>
<div class="t" style="left:1211.8px;top:714.59px;font-size:11.5px;font-weight:normal;color:#333;transform:scaleX(0.89);transform-origin:0 0;">Cancelar</div>
</body></html>
